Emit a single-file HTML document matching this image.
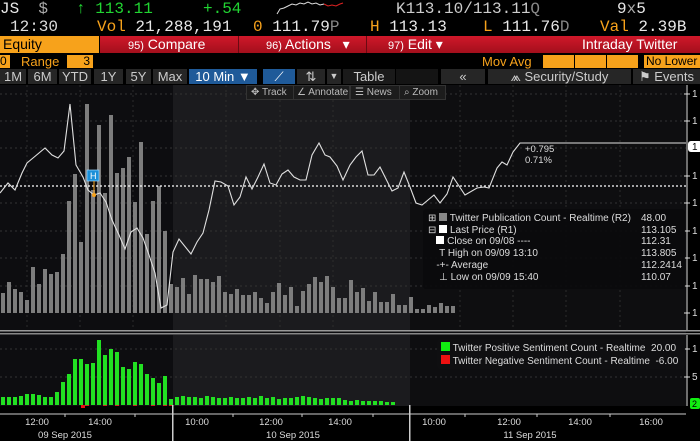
<!DOCTYPE html>
<html><head><meta charset="utf-8"><style>
*{margin:0;padding:0;box-sizing:border-box}
body{width:700px;height:441px;background:#000;overflow:hidden;position:relative;font-family:"Liberation Sans",sans-serif;color:#ddd}
.a{position:absolute;white-space:nowrap}
.m{font-family:"Liberation Mono",monospace}
.t1{font-size:16px;top:0px;line-height:18px}
.o{color:#f7a21b}.g{color:#21d432}.w{color:#e8e8e8}
.btn{position:absolute;top:69px;height:15px;background:#262626;color:#ccc;font-size:13px;line-height:15px;text-align:center;white-space:nowrap}
.tb{position:absolute;top:85px;height:15px;background:#1c1c1c;border:1px solid #333;color:#bbb;font-size:10px;line-height:13px;padding-left:4px;white-space:nowrap;overflow:hidden}
</style></head><body>
<div class="a m t1 w" style="left:0">JS&nbsp;&nbsp;<span style="color:#aaa">$</span></div>
<div class="a m t1 g" style="left:76px">↑ 113.11</div>
<div class="a m t1 g" style="left:203px">+.54</div>
<svg class="a" style="left:276px;top:0" width="68" height="16"><polyline fill="none" stroke="#ddd" stroke-width="1" points="1,14 4,9 8,8 12,6 16,4 20,5 24,3 28,4 32,2 36,4 40,3 44,5 48,4"/><polyline fill="none" stroke="#d22" stroke-width="1" points="48,4 52,6 56,5 60,6 64,4 67,3"/></svg>
<div class="a m t1 w" style="left:396px;color:#ccc">K113.10/113.11<span style="color:#888">Q</span></div>
<div class="a m t1 w" style="left:617px">9<span style="color:#aaa">x</span>5</div>
<div class="a m t1" style="top:18px;left:10px;color:#ddd">12:30</div>
<div class="a m t1 o" style="top:18px;left:97px">Vol <span class="w">21,288,191</span></div>
<div class="a m t1 o" style="top:18px;left:253px">0 <span class="w">111.79</span><span style="color:#888">P</span></div>
<div class="a m t1 o" style="top:18px;left:370px">H <span class="w">113.13</span></div>
<div class="a m t1 o" style="top:18px;left:483px">L <span class="w">111.76</span><span style="color:#888">D</span></div>
<div class="a m t1 o" style="top:18px;left:600px">Val <span class="w">2.39B</span></div>
<div class="a" style="left:0;top:36px;width:99px;height:17px;background:#f7a21b;color:#000;font-size:14px;line-height:17px;padding-left:3px">Equity</div>
<div class="a" style="left:100px;top:36px;width:600px;height:17px;background:linear-gradient(#d0182a,#a30f1c);"></div>
<div class="a" style="left:238px;top:36px;width:1px;height:17px;background:#6a0a12"></div>
<div class="a" style="left:366px;top:36px;width:1px;height:17px;background:#6a0a12"></div>
<div class="a" style="left:128px;top:36px;color:#fff;font-size:14px;line-height:17px"><span style="font-size:11px">95)</span> Compare</div>
<div class="a" style="left:266px;top:36px;color:#fff;font-size:14px;line-height:17px"><span style="font-size:11px">96)</span> Actions&nbsp;&nbsp; ▾</div>
<div class="a" style="left:388px;top:36px;color:#fff;font-size:14px;line-height:17px"><span style="font-size:11px">97)</span> Edit ▾</div>
<div class="a" style="left:582px;top:36px;color:#fff;font-size:14px;line-height:17px">Intraday Twitter</div>
<div class="a" style="left:0;top:55px;width:10px;height:13px;background:#f7a21b;color:#000;font-size:12px;line-height:13px">0</div>
<div class="a o" style="left:21px;top:54px;font-size:13px;line-height:15px">Range</div>
<div class="a" style="left:67px;top:55px;width:26px;height:13px;background:#f7a21b;color:#000;font-size:12px;line-height:13px;text-align:right;padding-right:3px">3</div>
<div class="a o" style="left:482px;top:54px;font-size:13px;line-height:15px">Mov Avg</div>
<div class="a" style="left:543px;top:55px;width:31px;height:13px;background:#f7a21b"></div>
<div class="a" style="left:575px;top:55px;width:31px;height:13px;background:#f7a21b"></div>
<div class="a" style="left:607px;top:55px;width:31px;height:13px;background:#f7a21b"></div>
<div class="a" style="left:644px;top:55px;width:56px;height:13px;background:#f7a21b;color:#000;font-size:12px;line-height:13px;padding-left:2px">No Lower</div>
<div class="btn" style="left:0;width:26px">1M</div>
<div class="btn" style="left:28px;width:29px">6M</div>
<div class="btn" style="left:59px;width:32px">YTD</div>
<div class="btn" style="left:94px;width:29px">1Y</div>
<div class="btn" style="left:126px;width:25px">5Y</div>
<div class="btn" style="left:153px;width:34px">Max</div>
<div class="btn" style="left:189px;width:68px;background:#1f5a99;color:#fff">10 Min ▼</div>
<div class="btn" style="left:263px;width:32px;background:#1f5a99;color:#fff">⟋</div>
<div class="btn" style="left:297px;width:28px">⇅</div>
<div class="btn" style="left:327px;width:14px;font-size:9px">▼</div>
<div class="btn" style="left:343px;width:52px;background:#1a1a1a">Table</div>
<div class="btn" style="left:396px;width:42px;background:#141414"></div>
<div class="btn" style="left:441px;width:44px">«</div>
<div class="btn" style="left:488px;width:143px">⩕ Security/Study</div>
<div class="btn" style="left:633px;width:67px;text-align:left;padding-left:6px">⚑ Events</div>
<svg class="a" style="left:0;top:85px" width="700" height="356" id="ch"></svg>
<div class="tb" style="left:246px;width:48px">✥ Track</div>
<div class="tb" style="left:293px;width:57px;padding-left:3px">∠ Annotate</div>
<div class="tb" style="left:350px;width:50px">☰ News</div>
<div class="tb" style="left:399px;width:47px">⌕ Zoom</div>
<div class="a" style="left:423px;top:209px;width:262px;height:80px;background:rgba(10,10,12,.92);border-radius:3px"></div>
<div class="a" style="left:428px;top:213px;font-size:10px;line-height:11.7px;color:#ddd">
<div>⊞ <span style="display:inline-block;width:8px;height:8px;background:#888"></span> Twitter Publication Count - Realtime (R2)</div>
<div>⊟ <span style="display:inline-block;width:8px;height:8px;background:#fff"></span> Last Price (R1)</div>
<div>&nbsp;&nbsp;&nbsp;<span style="display:inline-block;width:8px;height:8px;background:#fff"></span> Close on 09/08 ----</div>
<div>&nbsp;&nbsp;&nbsp;&nbsp;T High on 09/09 13:10</div>
<div>&nbsp;&nbsp;&nbsp;-+- Average</div>
<div>&nbsp;&nbsp;&nbsp;&nbsp;⊥ Low on 09/09 15:40</div></div>
<div class="a" style="left:641px;top:213px;font-size:10px;line-height:11.7px;color:#ddd;width:44px;text-align:left">48.00<br>113.105<br>112.31<br>113.805<br>112.2414<br>110.07</div>
<div class="a" style="left:437px;top:339px;width:248px;height:30px;background:rgba(16,16,18,.95);border-radius:3px"></div>
<div class="a" style="left:441px;top:342px;font-size:10px;line-height:12px;color:#ddd">
<div><span style="display:inline-block;width:9px;height:9px;background:#1e1"></span> Twitter Positive Sentiment Count - Realtime&nbsp; 20.00</div>
<div><span style="display:inline-block;width:9px;height:9px;background:#e11"></span> Twitter Negative Sentiment Count - Realtime&nbsp; -6.00</div></div>
<div class="a" style="left:525px;top:144px;font-size:9.5px;line-height:11px;color:#ddd">+0.795<br>0.71%</div>
<script>
var s='';
function R(x,y,w,h,c){s+='<rect x="'+x+'" y="'+y+'" width="'+w+'" height="'+h+'" fill="'+c+'"/>';}
var O=85;
R(0,0,173,245,'#0d0d10');R(173,0,237,245,'#1b1b1e');R(410,0,276,245,'#0e0e10');
R(0,245,686,5,'#0d0d10');
[94,121,148,176,203,231,258,286].forEach(function(y){s+='<line x1="0" x2="686" y1="'+(y-O)+'" y2="'+(y-O)+'" stroke="#333" stroke-dasharray="2,3"/>';});
[27,80,133,226,280,333,460,513,566,620].forEach(function(x){s+='<line x1="'+x+'" x2="'+x+'" y1="0" y2="245" stroke="#2c2c2c" stroke-dasharray="2,3"/>';});
var up=[293,282,289,292,300,267,284,269,274,272,254,201,174,242,104,190,125,193,115,173,168,157,202,142,234,201,186,231,
284,287,278,294,275,279,279,282,276,292,294,289,295,295,292,298,303,292,283,295,287,306,291,284,277,282,276,287,298,
298,280,292,288,301,292,302,302,294,305,305,297,309,309,305,307,303,306,306];
for(var i=0;i<up.length;i++){var x=1+i*6;R(x,up[i]-O,4,313-up[i],'#7d7d7d');}
s+='<line x1="0" x2="686" y1="'+(186-O)+'" y2="'+(186-O)+'" stroke="#fff" stroke-width="1.3" stroke-dasharray="2,2"/>';
var p=[[0,193],[8,183],[15,190],[22,173],[27,163],[33,158],[45,148],[52,155],[58,158],[64,151],[70,104],[76,165],[83,177],[88,190],[94,195],[100,193],[106,202],[112,220],[119,235],[125,249],[131,232],[137,228],[143,238],[149,255],[155,273],[161,308],[167,305],[173,252],[179,239],[191,254],[197,242],[203,233],[209,210],[215,181],[221,182],[228,186],[234,205],[240,197],[246,177],[252,189],[258,177],[264,164],[270,183],[276,185],[282,174],[288,170],[294,177],[300,180],[306,180],[312,155],[319,143],[325,155],[330,157],[337,166],[343,180],[350,165],[356,157],[362,151],[368,175],[374,175],[380,167],[392,191],[398,188],[404,172],[410,187],[416,203],[422,205],[434,195],[440,203],[447,194],[453,177],[465,195],[477,188],[484,187],[489,188],[497,168],[502,162],[507,165],[513,152],[520,143],[686,143]];
s+='<polyline fill="none" stroke="#e0e0e0" stroke-width="1.1" points="'+p.map(function(q){return q[0]+','+(q[1]-O)}).join(' ')+'"/>';
R(87,170-O,12,11,'#1a8fd8');s+='<rect x="87" y="'+(170-O)+'" width="12" height="11" fill="none" stroke="#9fd8ff" stroke-width=".7"/><text x="90" y="'+(179-O)+'" font-size="9" fill="#fff" font-family="Liberation Sans">H</text><line x1="94" x2="94" y1="'+(181-O)+'" y2="'+(195-O)+'" stroke="#f7a21b"/><circle cx="94" cy="'+(195-O)+'" r="2" fill="#f7a21b"/>';
s+='<line x1="687" x2="687" y1="0" y2="245" stroke="#ddd"/>';
[94,121,176,203,231,258,286,313].forEach(function(y){s+='<line x1="684" x2="690" y1="'+(y-O)+'" y2="'+(y-O)+'" stroke="#ddd"/><text x="692" y="'+(y+3-O)+'" font-size="10" fill="#ddd" font-family="Liberation Sans">1</text>';});
s+='<rect x="688" y="'+(141-O)+'" width="14" height="11" rx="3" fill="#fff"/><text x="692" y="'+(150-O)+'" font-size="10" fill="#000" font-family="Liberation Sans">1</text>';
R(0,330-O,700,1.5,'#999');R(0,333-O,700,1.5,'#888');
R(0,335-O,173,71,'#0d0d10');R(173,335-O,237,71,'#1b1b1e');R(410,335-O,276,71,'#0e0e10');
[349,377].forEach(function(y){s+='<line x1="0" x2="686" y1="'+(y-O)+'" y2="'+(y-O)+'" stroke="#333" stroke-dasharray="2,3"/><line x1="684" x2="690" y1="'+(y-O)+'" y2="'+(y-O)+'" stroke="#ddd"/>';});
s+='<text x="692" y="'+(352-O)+'" font-size="10" fill="#ddd" font-family="Liberation Sans">1</text><text x="692" y="'+(380-O)+'" font-size="10" fill="#ddd" font-family="Liberation Sans">5</text>';
s+='<line x1="687" x2="687" y1="'+(335-O)+'" y2="'+(406-O)+'" stroke="#ddd"/>';
s+='<rect x="690" y="'+(398-O)+'" width="10" height="11" rx="2" fill="#1e1"/><text x="692" y="'+(407-O)+'" font-size="9" fill="#000" font-family="Liberation Sans">2</text>';
var gt=[397,397,397,396,394,394,395,397,397,392,382,374,359,359,364,363,340,355,349,352,367,369,362,364,374,378,383,376,
399,397,396,397,397,398,396,397,398,398,397,398,398,397,398,396,398,397,399,398,398,397,396,397,398,399,398,398,398,
400,401,400,401,401,401,401,402,402];
for(var i=0;i<gt.length;i++){var x=1+i*6;R(x,gt[i]-O,4,405-gt[i],'#22e022');}
[14,17,19,22,25,27,28].forEach(function(i){R(1+i*6,405-O,4,1,'#c22');});
R(81,405-O,4,3,'#e11');
s+='<line x1="0" x2="686" y1="'+(414-O)+'" y2="'+(414-O)+'" stroke="#ccc"/>';
R(172,405-O,1.5,36,'#ccc');R(409,405-O,1.5,36,'#ccc');
[[37,'12:00'],[100,'14:00'],[197,'10:00'],[271,'12:00'],[340,'14:00'],[434,'10:00'],[509,'12:00'],[580,'14:00'],[651,'16:00']].forEach(function(q){s+='<text x="'+q[0]+'" y="'+(425-O)+'" font-size="9.5" fill="#ddd" text-anchor="middle" font-family="Liberation Sans">'+q[1]+'</text>';});
[[65,'09 Sep 2015'],[293,'10 Sep 2015'],[530,'11 Sep 2015']].forEach(function(q){s+='<text x="'+q[0]+'" y="'+(438-O)+'" font-size="9.5" fill="#ddd" text-anchor="middle" font-family="Liberation Sans">'+q[1]+'</text>';});
[65,135,233,302,373,465,537,610].forEach(function(x){s+='<line x1="'+x+'" x2="'+x+'" y1="'+(414-O)+'" y2="'+(417-O)+'" stroke="#ccc"/>';});
document.getElementById('ch').innerHTML=s;
</script>
</body></html>
